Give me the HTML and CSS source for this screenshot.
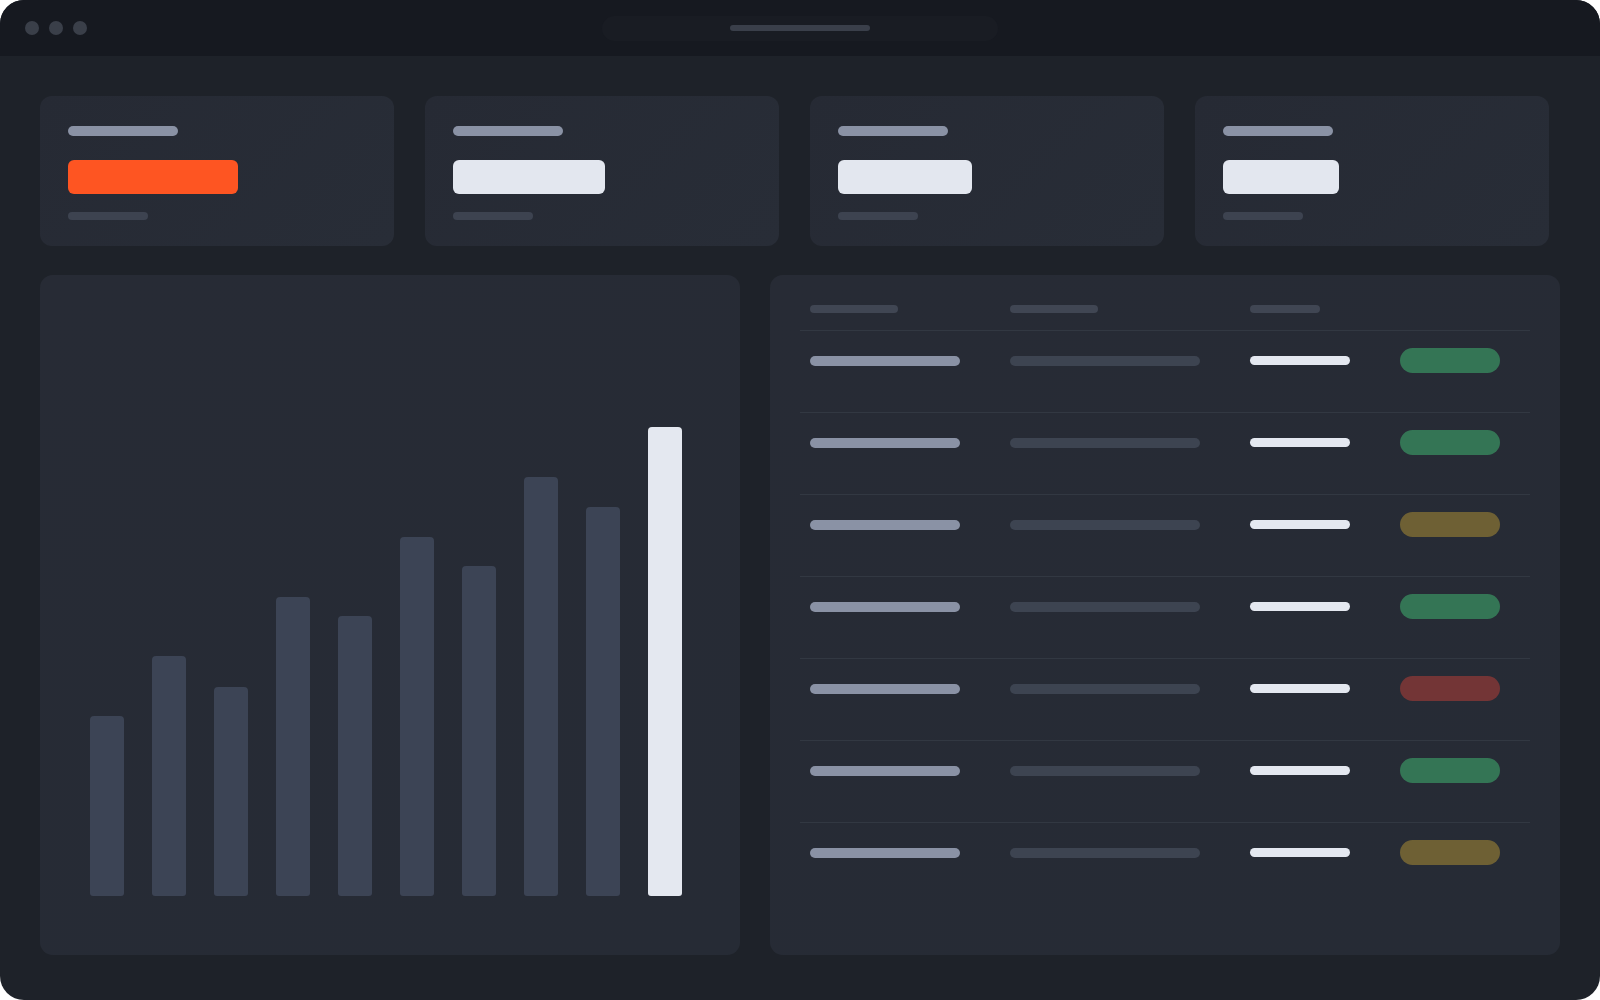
FILE: index.html
```html
<!DOCTYPE html>
<html lang="en">
<head>
<meta charset="utf-8">
<title>Dashboard</title>
<link rel="stylesheet" href="styles.css">
</head>
<body>
<div class="window">
  <header class="titlebar">
    <div class="dots"><span class="dot"></span><span class="dot"></span><span class="dot"></span></div>
    <div class="address"><span class="address-line"></span></div>
    <div class="spacer"></div>
  </header>
  <main class="content">
    <section class="cards">
      <div class="card"><span class="c-label"></span><span class="c-value accent" style="width:170px"></span><span class="c-sub"></span></div>
      <div class="card"><span class="c-label"></span><span class="c-value" style="width:152px"></span><span class="c-sub"></span></div>
      <div class="card"><span class="c-label"></span><span class="c-value" style="width:134px"></span><span class="c-sub"></span></div>
      <div class="card"><span class="c-label"></span><span class="c-value" style="width:116px"></span><span class="c-sub"></span></div>
    </section>
    <section class="lower">
      <div class="panel chart">
        <span class="bar" style="height:180px"></span>
        <span class="bar" style="height:240px"></span>
        <span class="bar" style="height:209px"></span>
        <span class="bar" style="height:299px"></span>
        <span class="bar" style="height:280px"></span>
        <span class="bar" style="height:359px"></span>
        <span class="bar" style="height:330px"></span>
        <span class="bar" style="height:419px"></span>
        <span class="bar" style="height:389px"></span>
        <span class="bar bar-hi" style="height:469px"></span>
      </div>
      <div class="panel table">
        <div class="t-head">
          <span class="h-bar w88"></span><span class="h-bar w88"></span><span class="h-bar w70"></span><span></span>
        </div>
        <div class="t-row"><span class="r-name"></span><span class="r-desc"></span><span class="r-val"></span><span class="badge ok"></span></div>
        <div class="t-row"><span class="r-name"></span><span class="r-desc"></span><span class="r-val"></span><span class="badge ok"></span></div>
        <div class="t-row"><span class="r-name"></span><span class="r-desc"></span><span class="r-val"></span><span class="badge warn"></span></div>
        <div class="t-row"><span class="r-name"></span><span class="r-desc"></span><span class="r-val"></span><span class="badge ok"></span></div>
        <div class="t-row"><span class="r-name"></span><span class="r-desc"></span><span class="r-val"></span><span class="badge err"></span></div>
        <div class="t-row"><span class="r-name"></span><span class="r-desc"></span><span class="r-val"></span><span class="badge ok"></span></div>
        <div class="t-row"><span class="r-name"></span><span class="r-desc"></span><span class="r-val"></span><span class="badge warn"></span></div>
      </div>
    </section>
  </main>
</div>
</body>
</html>
```
FILE: styles.css
```css
* { box-sizing: border-box; }
html, body { margin: 0; padding: 0; background: #ffffff; }
body { font-family: "Inter", "Liberation Sans", sans-serif; }

.window {
  width: 1600px;
  height: 1000px;
  border-radius: 24px;
  overflow: hidden;
  background: #1e2229;
  display: flex;
  flex-direction: column;
}

.titlebar {
  height: 56px;
  flex: 0 0 56px;
  background: #161920;
  display: grid;
  grid-template-columns: 1fr 396px 1fr;
  align-items: center;
  padding: 0 25px;
}
.dots { display: flex; gap: 10px; }
.dot { width: 14px; height: 14px; border-radius: 50%; background: #3a3f49; display: block; }
.address {
  height: 25px;
  border-radius: 13px;
  background: #191c23;
  display: flex;
  align-items: center;
  justify-content: center;
}
.address-line { width: 140px; height: 6px; border-radius: 3px; background: #3a3f4a; display: block; }

.content { padding: 40px 40px 45px 40px; flex: 1; display: flex; flex-direction: column; }

.cards {
  display: grid;
  grid-template-columns: repeat(4, 354px);
  gap: 31px;
}
.card {
  height: 150px;
  border-radius: 12px;
  background: linear-gradient(135deg, #262a34 0%, #282d37 100%);
  padding: 30px 28px 0 28px;
  display: flex;
  flex-direction: column;
  align-items: flex-start;
}
.c-label { width: 110px; height: 10px; border-radius: 5px; background: #8a92a5; display: block; }
.c-value { height: 34px; border-radius: 6px; background: #e3e7ef; margin-top: 24px; display: block; }
.c-value.accent { background: #fe5522; }
.c-sub { width: 80px; height: 8px; border-radius: 4px; background: #3d4350; margin-top: 18px; display: block; }

.lower {
  margin-top: 29px;
  display: grid;
  grid-template-columns: 700px 790px;
  gap: 30px;
  height: 680px;
}
.panel {
  border-radius: 13px;
  background: linear-gradient(160deg, #272b35 0%, #262b35 100%);
}

.chart {
  display: flex;
  align-items: flex-end;
  gap: 28px;
  padding: 0 0 59px 50px;
}
.bar {
  width: 34px;
  border-radius: 4px 4px 3px 3px;
  background: #3c4455;
  display: block;
  filter: blur(0.5px);
}
.bar-hi { background: #e4e8f0; filter: none; }

.table { padding: 30px 30px; }
.t-head, .t-row {
  display: grid;
  grid-template-columns: 200px 240px 150px 1fr;
  padding: 0 10px;
}
.t-head { height: 25px; align-items: start; }
.h-bar { height: 8px; border-radius: 4px; background: #404653; display: block; }
.w88 { width: 88px; }
.w70 { width: 70px; }

.t-row {
  border-top: 1px solid #323842;
  height: 82px;
  padding-top: 17px;
  grid-template-rows: 25px;
  align-items: center;
  align-content: start;
}
.r-name { width: 150px; height: 10px; border-radius: 5px; background: #8a92a5; display: block; }
.r-desc { width: 190px; height: 10px; border-radius: 5px; background: #3d4451; display: block; filter: blur(0.4px); }
.r-val { width: 100px; height: 9px; border-radius: 5px; background: #e4e8f0; display: block; }
.badge { width: 100px; height: 25px; border-radius: 13px; display: block; }
.badge.ok { background: #347555; }
.badge.warn { background: #6e6034; }
.badge.err { background: #733536; }
```
